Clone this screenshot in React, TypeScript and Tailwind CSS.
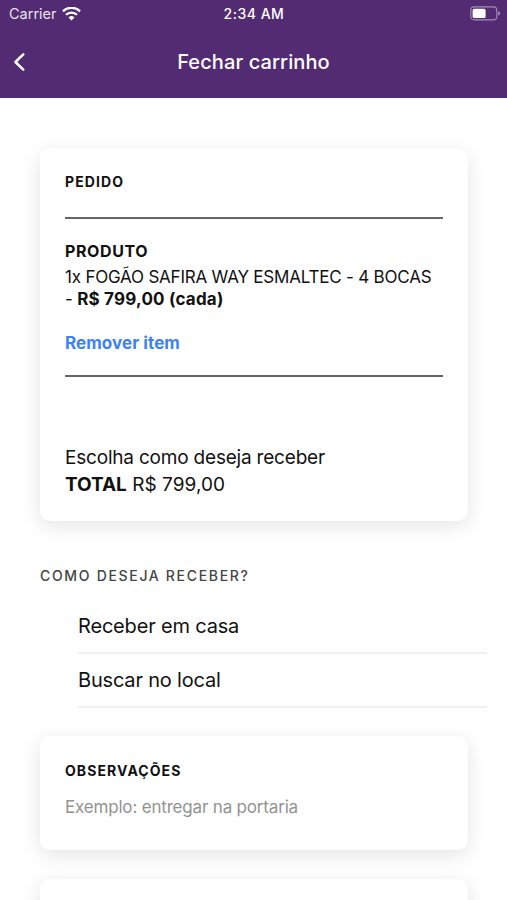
import { ReactNode, useState } from "react";
import clsx from "clsx";

type Item = {
  id: number;
  quantity: number;
  name: string;
  price: string;
};

const items: Item[] = [
  {
    id: 1,
    quantity: 1,
    name: "FOGÃO SAFIRA WAY ESMALTEC - 4 BOCAS",
    price: "R$ 799,00",
  },
];

const deliveryOptions = ["Receber em casa", "Buscar no local"];

const WifiIcon = () => (
  <svg width="19" height="14" viewBox="0 0 19 14" fill="none">
    <path d="M1 4.4a12 12 0 0 1 17 0" stroke="#fff" strokeWidth="2.5" />
    <path d="M4 7.8a7.8 7.8 0 0 1 11 0" stroke="#fff" strokeWidth="2.3" />
    <path d="M6.5 10.5a4.3 4.3 0 0 1 6 0l-3 3z" fill="#fff" />
  </svg>
);

const BatteryIcon = () => (
  <svg width="31" height="15" viewBox="0 0 31 15" fill="none">
    <rect x="0.8" y="0.9" width="26" height="13" rx="3.4" stroke="#a48fb5" strokeWidth="1.1" />
    <rect x="2.6" y="2.8" width="13" height="9.2" rx="1.6" fill="#fff" />
    <path d="M28.2 5.2c2.6.9 2.6 3.5 0 4.4z" fill="#a48fb5" />
  </svg>
);

const Card = ({ className, children }: { className?: string; children?: ReactNode }) => (
  <div
    className={clsx(
      "mx-10 w-[428px] rounded-[10px] bg-white px-[25px] shadow-[0_5px_20px_rgba(0,0,0,0.11)]",
      className
    )}
  >
    {children}
  </div>
);

const Header = () => (
  <header className="h-[98px] bg-[#532b72] text-white">
    <div className="grid h-[27px] grid-cols-3 items-center pl-[9px] pr-[6px]">
      <div className="flex items-center gap-[5px] text-[14.5px] text-[#e9e2ee]">
        Carrier
        <WifiIcon />
      </div>
      <span className="-ml-[2px] text-center text-[14px] font-[550] tracking-[0.5px]">
        2:34 AM
      </span>
      <div className="flex justify-end">
        <BatteryIcon />
      </div>
    </div>
    <div className="grid h-[70px] grid-cols-[40px_1fr_40px] items-center">
      <button className="pl-[13px]" aria-label="Voltar">
        <svg width="13" height="20" viewBox="0 0 13 20" fill="none">
          <path
            d="M10.3 2.4L2.4 10l7.9 7.6"
            stroke="#fff"
            strokeWidth="2.5"
            strokeLinecap="round"
            strokeLinejoin="round"
          />
        </svg>
      </button>
      <h1 className="text-center text-[20px] font-[550] tracking-[0.1px]">Fechar carrinho</h1>
    </div>
  </header>
);

const App = () => {
  const [delivery, setDelivery] = useState<string>();
  const [note, setNote] = useState<string>("");

  return (
    <div className="h-[900px] w-[507px] overflow-hidden bg-white font-['Inter',sans-serif] text-[#111]">
      <Header />
      <main className="flex flex-col pt-[50px]">
        <Card className="h-[373px] pt-[23px]">
          <h2 className="text-[14px] font-bold leading-[21px] tracking-[1.1px]">PEDIDO</h2>
          <div className="mt-[25px] border-t-2 border-[#666]" />
          {items.map((item) => (
            <div key={item.id} className="pt-[20px]">
              <h3 className="text-[16px] font-bold leading-[24px] tracking-[0.6px]">PRODUTO</h3>
              <p className="mt-[3px] whitespace-nowrap text-[17px] leading-[22px] tracking-[-0.21px]">
                {item.quantity}x {item.name}
                <br />- <b className="tracking-[0.2px]">{item.price} (cada)</b>
              </p>
              <button className="mt-[22px] block text-[17px] font-bold leading-[22px] tracking-[0.08px] text-[#3b82f6]">
                Remover item
              </button>
            </div>
          ))}
          <div className="mt-[21px] border-t-2 border-[#666]" />
          <p className="mt-[67px] text-[19px] leading-[27px] tracking-[-0.2px]">
            {delivery ?? "Escolha como deseja receber"}
          </p>
          <p className="text-[19px] leading-[27px] tracking-[0.05px]">
            <b className="tracking-[-0.05px]">TOTAL</b> R$ 799,00
          </p>
        </Card>

        <h2 className="mt-[44px] px-10 text-[14px] font-medium leading-[21px] tracking-[1.68px] text-[#444]">
          COMO DESEJA RECEBER?
        </h2>
        <ul className="mt-[14px] pl-[78px] pr-[20px]">
          {deliveryOptions.map((option) => (
            <li key={option} className="border-b-2 border-[#f1f1f1]">
              <button
                className="block h-[52px] w-full text-left text-[20px] tracking-[-0.18px]"
                onClick={() => setDelivery(option)}
              >
                {option}
              </button>
            </li>
          ))}
        </ul>

        <Card className="mt-[28px] h-[114px] pt-[24px]">
          <h2 className="text-[14px] font-bold leading-[21px] tracking-[1.07px]">OBSERVAÇÕES</h2>
          <input
            className="mt-[14px] block w-full text-[17px] leading-[24px] tracking-[-0.18px] outline-none placeholder:text-[#929292]"
            placeholder="Exemplo: entregar na portaria"
            value={note}
            onChange={(e) => setNote(e.target.value)}
          />
        </Card>

        <Card className="mt-[29px] h-[114px]" />
      </main>
    </div>
  );
};

export default App;
